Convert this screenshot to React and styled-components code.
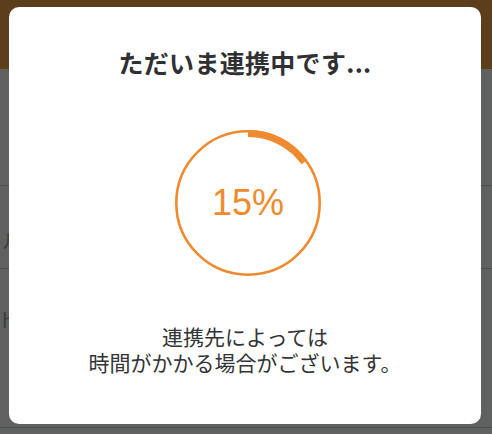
import React from "react";
import styled, { createGlobalStyle } from "styled-components";

const Global = createGlobalStyle`
  html, body { margin: 0; padding: 0; }
  body {
    width: 492px;
    height: 434px;
    overflow: hidden;
    background: #5f6060;
    font-family: "Noto Sans CJK JP", "Noto Sans", sans-serif;
  }
`;

const Page = styled.div`
  position: relative;
  width: 492px;
  height: 434px;
  overflow: hidden;
  background: #5f6060;
`;

const Header = styled.div`
  height: 69px;
  background: #5d3e1a;
`;

const Row = styled.div`
  height: ${(p) => p.$h}px;
  border-bottom: ${(p) => (p.$line ? "1px solid #4f5050" : "none")};
  box-sizing: border-box;
  display: flex;
  align-items: ${(p) => p.$align || "center"};
  color: #3c3d3d;
  font-size: 20px;
  white-space: nowrap;
`;

const RowText = styled.span`
  margin-left: ${(p) => p.$x}px;
  margin-top: ${(p) => p.$y || 0}px;
`;

const Modal = styled.div`
  position: absolute;
  left: 9px;
  top: 7px;
  width: 472px;
  height: 417px;
  background: #ffffff;
  border-radius: 10px;
  display: flex;
  flex-direction: column;
  align-items: center;
  box-sizing: border-box;
  padding-top: 41px;
`;

const Title = styled.h1`
  margin: 0;
  font-size: 25px;
  line-height: 28px;
  font-weight: 700;
  color: #2f3032;
  letter-spacing: 0.3px;
`;

const Ring = styled.div`
  position: relative;
  width: 148px;
  height: 148px;
  margin: 53px 0 0 6px;
  display: flex;
  align-items: center;
  justify-content: center;
`;

const RingSvg = styled.svg`
  position: absolute;
  left: 0;
  top: 0;
`;

const Percent = styled.span`
  position: relative;
  font-family: "Liberation Sans", Arial, sans-serif;
  font-size: 36px;
  color: #ef8a2e;
`;

const Note = styled.div`
  margin-top: 46px;
  display: flex;
  flex-direction: column;
  align-items: center;
  color: #333436;
`;

const NoteLine = styled.span`
  font-size: 21px;
  line-height: 26px;
  height: 26px;
  overflow: visible;
  font-weight: 400;
  white-space: nowrap;
`;

export default function App() {
  const r = 69.5;
  const c = 2 * Math.PI * r;
  const pct = 0.15;
  return (
    <>
      <Global />
      <Page>
        <Header />
        <Row $h={117} $line />
        <Row $h={83} $line>
          <RowText $x={2} $y={26}>ル</RowText>
        </Row>
        <Row $h={159} $line $align="flex-start">
          <RowText $x={2} $y={36}>h</RowText>
        </Row>
        <Modal>
          <Title>ただいま連携中です...</Title>
          <Ring>
            <RingSvg width="148" height="148" viewBox="0 0 148 148">
              <circle cx="74" cy="74" r="71.7" fill="none" stroke="#ef8a2e" strokeWidth="2.6" />
              <circle
                cx="74"
                cy="74"
                r={r}
                fill="none"
                stroke="#ef8a2e"
                strokeWidth="7"
                strokeDasharray={`${c * pct} ${c}`}
                transform="rotate(-90 74 74)"
              />
            </RingSvg>
            <Percent>15%</Percent>
          </Ring>
          <Note>
            <NoteLine>連携先によっては</NoteLine>
            <NoteLine>時間がかかる場合がございます。</NoteLine>
          </Note>
        </Modal>
      </Page>
    </>
  );
}
